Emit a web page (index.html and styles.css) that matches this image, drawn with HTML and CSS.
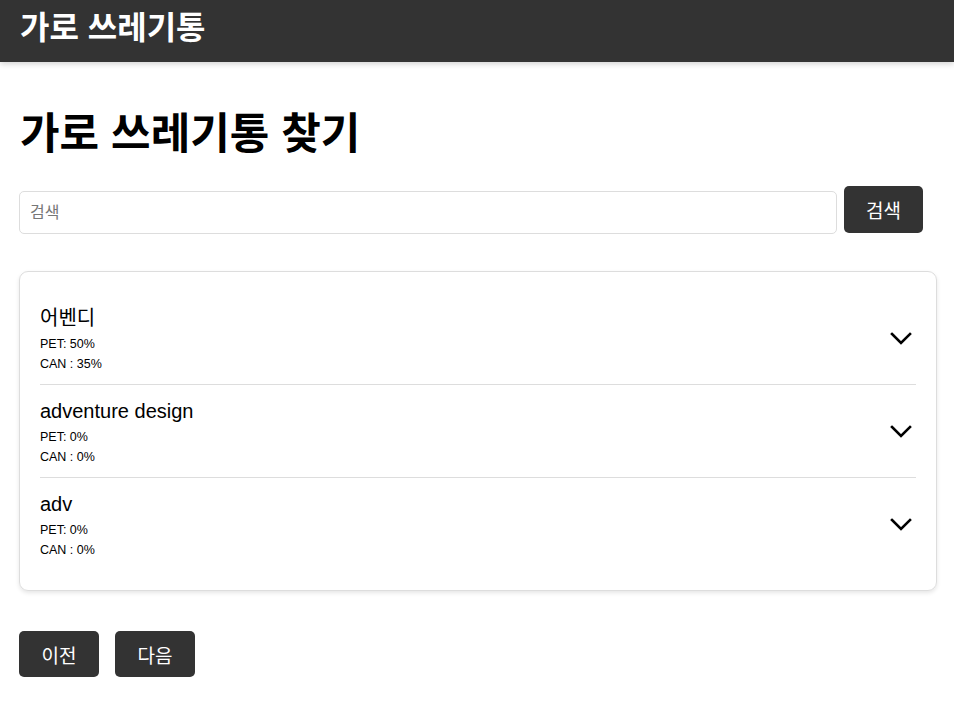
FILE: index.html
```html
<!DOCTYPE html>
<html lang="ko">
<head>
<meta charset="utf-8">
<title>가로 쓰레기통</title>
<link rel="stylesheet" href="styles.css">
</head>
<body>
<header class="topbar">
  <div class="brand">가로 쓰레기통</div>
</header>
<main class="page">
  <h1 class="title">가로 쓰레기통 찾기</h1>
  <form class="search">
    <input class="search-input" type="text" placeholder="검색">
    <button class="btn search-btn" type="button">검색</button>
  </form>
  <section class="card">
    <div class="item">
      <div class="item-text">
        <div class="item-name">어벤디</div>
        <div class="item-stat">PET: 50%</div>
        <div class="item-stat">CAN : 35%</div>
      </div>
      <svg class="chev" width="24" height="14" viewBox="0 0 24 14"><path d="M3 2 L12 11 L21 2" fill="none" stroke="#000" stroke-width="2.6" stroke-linecap="square" stroke-linejoin="miter"/></svg>
    </div>
    <div class="item">
      <div class="item-text">
        <div class="item-name">adventure design</div>
        <div class="item-stat">PET: 0%</div>
        <div class="item-stat">CAN : 0%</div>
      </div>
      <svg class="chev" width="24" height="14" viewBox="0 0 24 14"><path d="M3 2 L12 11 L21 2" fill="none" stroke="#000" stroke-width="2.6" stroke-linecap="square" stroke-linejoin="miter"/></svg>
    </div>
    <div class="item">
      <div class="item-text">
        <div class="item-name">adv</div>
        <div class="item-stat">PET: 0%</div>
        <div class="item-stat">CAN : 0%</div>
      </div>
      <svg class="chev" width="24" height="14" viewBox="0 0 24 14"><path d="M3 2 L12 11 L21 2" fill="none" stroke="#000" stroke-width="2.6" stroke-linecap="square" stroke-linejoin="miter"/></svg>
    </div>
  </section>
  <nav class="pager">
    <button class="btn pager-btn" type="button">이전</button>
    <button class="btn pager-btn" type="button">다음</button>
  </nav>
</main>
</body>
</html>
```
FILE: styles.css
```css
* { box-sizing: border-box; }
html, body { margin: 0; padding: 0; background: #fff; }
body {
  font-family: "Liberation Sans", "Noto Sans CJK KR", sans-serif;
  color: #000;
}
.topbar {
  height: 62px;
  background: #333;
  box-shadow: 0 2px 6px rgba(0,0,0,0.18);
  padding: 0 20px;
  display: flex;
  align-items: center;
}
.brand {
  color: #fff;
  font-size: 32px;
  font-weight: bold;
  line-height: 36px;
  margin-top: -6px;
}
.page {
  padding: 0 17px 0 19px;
}
.title {
  margin: 46px 0 0 1px;
  font-size: 43px;
  line-height: 52px;
  font-weight: bold;
}
.search {
  display: flex;
  align-items: flex-start;
  margin-top: 26px;
  width: 904px;
  gap: 7px;
}
.search-input {
  flex: 1;
  height: 43px;
  margin-top: 5px;
  border: 1px solid #ddd;
  border-radius: 5px;
  padding: 0 10px;
  font-family: inherit;
  font-size: 16px;
  color: #000;
  outline: none;
}
.search-input::placeholder { color: #777; }
.btn {
  background: #333;
  color: #fff;
  border: none;
  border-radius: 5px;
  font-family: inherit;
  font-size: 19px;
  cursor: pointer;
}
.search-btn {
  width: 79px;
  height: 47px;
}
.card {
  margin-top: 37px;
  border: 1px solid #ddd;
  border-radius: 9px;
  box-shadow: 0 2px 4px rgba(0,0,0,0.1);
  padding: 20px 20px;
}
.item {
  display: flex;
  align-items: center;
  justify-content: space-between;
  padding: 15px 0 10px;
  border-bottom: 1px solid #ddd;
}
.item:last-child { border-bottom: none; }
.item-name {
  font-size: 20px;
  line-height: 23px;
  margin-bottom: 4px;
}
.item-stat {
  font-size: 12.5px;
  line-height: 20px;
}
.chev {
  margin-right: 3px;
  margin-top: -3px;
}
.pager {
  display: flex;
  gap: 16px;
  margin-top: 40px;
}
.pager-btn {
  width: 80px;
  height: 46px;
}
```
